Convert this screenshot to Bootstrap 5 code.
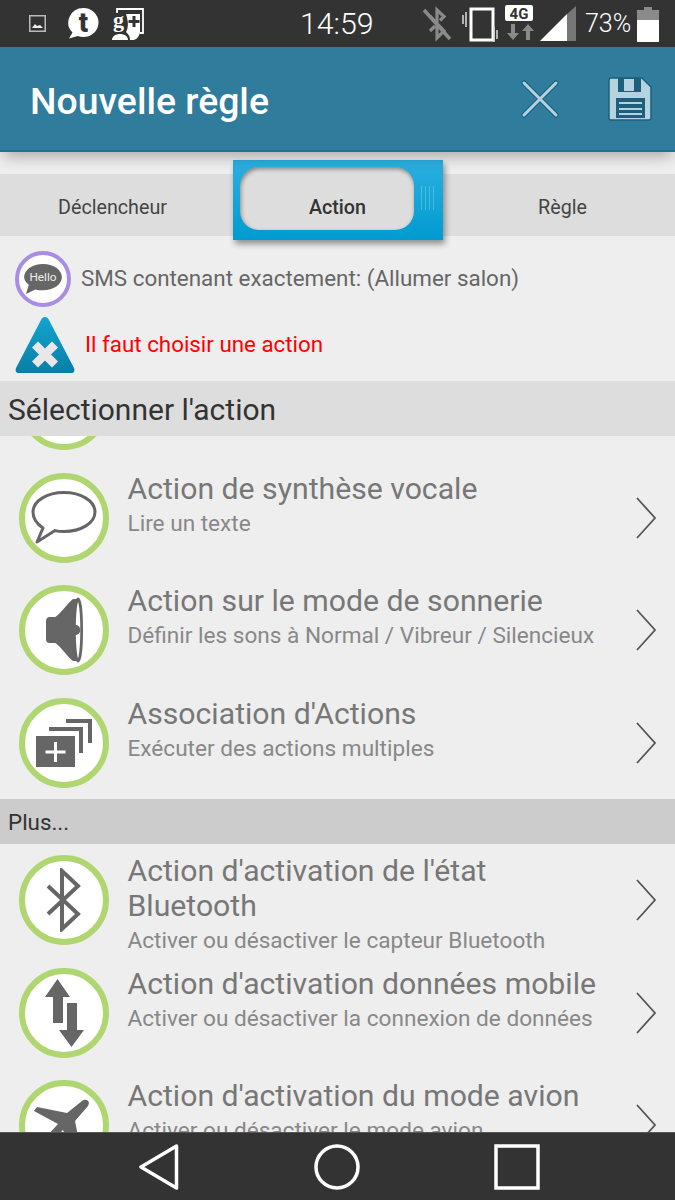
<!DOCTYPE html>
<html lang="fr">
<head>
<meta charset="utf-8">
<title>Nouvelle règle</title>
<link href="https://cdn.jsdelivr.net/npm/bootstrap@5.3.0/dist/css/bootstrap.min.css" rel="stylesheet">
<style>
html,body{margin:0;background:#eee}
body{font-family:Roboto,"Liberation Sans",sans-serif;width:675px;height:1200px;overflow:hidden}
.screen{width:675px;height:1200px;background:#eee}
.statusbar{height:47px;background:#333;color:#fff;flex:none}
.statusbar svg{display:block;flex:none}
.clock{font-size:30.3px;font-weight:300;line-height:50px;width:73px;margin-left:155px;white-space:nowrap}
.pct{font-size:25px;font-weight:300;line-height:50px;margin-left:9px;width:44px;white-space:nowrap}
.appbar{height:105px;background:#2f7c9d;flex:none;padding-left:30px;padding-right:22px;position:relative;z-index:3;box-shadow:0 8px 14px -4px rgba(0,0,0,.3);border-bottom:2px solid #28708f}
.apptitle{font-size:37.4px;font-weight:500;color:#fff;margin:0;padding-top:6px;line-height:1}
.stripgap{height:22px;flex:none}
.tabstrip{height:62px;background:#ddd;flex:none;position:relative}
.tabitem{width:225px;font-size:19.7px;color:#444;text-align:center;line-height:68px;position:relative;z-index:2}
.tabitem.on{font-weight:500;color:#333}
.tabblue{position:absolute;left:233px;top:-14px;width:210px;height:80px;background:linear-gradient(#2cafe0,#009bd0);box-shadow:2px 4px 6px rgba(0,0,0,.4);z-index:1}
.tabhole{position:absolute;left:7px;top:7px;width:174px;height:63px;background:#ddd;border-radius:19px;box-shadow:inset 1px 2px 4px rgba(0,0,0,.4)}
.tabgrip{position:absolute;left:188px;top:26px;width:14px;height:24px;background:repeating-linear-gradient(90deg,rgba(255,255,255,.22) 0 1px,transparent 1px 4px)}
.inforow{flex:none;height:145px;padding:15px 0 0 15px}
.trigger{height:56px;color:#666;font-size:22.4px}
.warn{height:65px;color:#f00;font-size:22.35px;margin-top:5px}
.thumb{width:56px;height:56px;border:4px solid #a98ce3;border-radius:50%;background:#fff;flex:none;margin-right:10px}
.sect{background:#ddd;height:55px;line-height:58px;padding-left:8px;font-size:30px;color:#333;flex:none}
.sect2{background:#ccc;height:45px;line-height:47px;padding-left:8px;font-size:22.4px;color:#333;flex:none}
.feed{flex:1 1 0;overflow:hidden;min-height:0}
.entry{height:112.5px;padding-left:19px;padding-right:18px;flex:none}
.sliver{height:25.5px;overflow:hidden;padding:0 0 0 19px;flex:none}
.sliver .disc{margin-top:-76px}
.disc{width:90px;height:90px;border:6px solid #b0d672;border-radius:50%;background:#fff;flex:none;margin-right:18.500px;display:flex;align-items:center;justify-content:center}
.entrytxt{padding-top:9px;padding-right:29px;align-self:flex-start;flex:1 1 0;min-width:0}
.etitle{font-size:30.2px;line-height:35px;color:#777}
.esub{font-size:22.6px;line-height:35px;color:#888}
.chev{flex:none}
.navbarbottom{height:68px;background:#333;flex:none;position:relative;z-index:3;border-top:1px solid #555}
.navbarbottom svg{display:block}
</style>
</head>
<body>
<div class="screen d-flex flex-column">

  <div class="statusbar d-flex align-items-center" style="padding-left:29px">
    <svg width="17" height="17" viewBox="0 0 17 17"><rect x=".75" y=".75" width="15.5" height="15.5" fill="none" stroke="#bbb" stroke-width="1.5"/><path d="M3 13l3-4 2 2 3-1 3 3z" fill="#eee"/></svg>
    <svg width="33" height="33" viewBox="0 0 33 33" style="margin-left:21px"><path d="M16.500 1a15 14.500 0 0 1 0 29c-2 0-4-.4-5.800-1.100L2 31.500l3.500-6A15 14.500 0 0 1 16.500 1z" fill="#fff"/><text x="16.500" y="25" text-anchor="middle" font-family="Roboto,sans-serif" font-weight="900" font-size="27" fill="#333">t</text></svg>
    <svg width="34" height="34" viewBox="0 0 34 34" style="margin-left:11px"><path d="M6 6V2h26v24h-3" fill="none" stroke="#fff" stroke-width="1.800"/><path d="M15 7h14v19c-2 5-4 7-7 7h-3c0-4-2-6-4-8 2-3 3-9 0-18z" fill="#fff"/><path d="M1 33c0-4 4-6 8-6s8 2 8 6z" fill="#fff"/><text x="7.500" y="20" text-anchor="middle" font-family="Liberation Serif,serif" font-weight="700" font-size="22" fill="#fff">g</text><path d="M23 9v11M17.500 14.500h11" stroke="#333" stroke-width="3"/></svg>
    <div class="clock">14:59</div>
    <svg width="30" height="38" viewBox="0 0 30 38" style="margin-left:49px"><path d="M8 11l14 15-7 7V5l7 6.500-4 4M8 26l5-5" fill="none" stroke="#8a8a8a" stroke-width="3.200"/><path d="M2 5l26 29" stroke="#8a8a8a" stroke-width="3.500"/></svg>
    <svg width="39" height="36" viewBox="0 0 39 36" style="margin-left:9px"><path d="M2 9v9M5 6v15" stroke="#ddd" stroke-width="1.500"/><rect x="10" y="3" width="22" height="31" fill="none" stroke="#fff" stroke-width="3"/><path d="M36 24v9M33 21v15" stroke="#ddd" stroke-width="1.500"/></svg>
    <svg width="29" height="37" viewBox="0 0 29 37" style="margin-left:5px"><rect x="0" y="0" width="28" height="16" rx="2" fill="#fff"/><text x="14" y="13.500" text-anchor="middle" font-family="Roboto,sans-serif" font-weight="700" font-size="15" fill="#333">4G</text><path d="M6 19v9h-4l6 7 6-7h-4v-9z" fill="#8a8a8a"/><path d="M21 35v-9h-4l6-7 6 7h-4v9z" fill="#8a8a8a"/></svg>
    <svg width="36" height="36" viewBox="0 0 36 36" style="margin-left:6px"><path d="M0 35L27 8v27z" fill="#fff"/><path d="M27 8L36 0v35h-9z" fill="#777"/></svg>
    <div class="pct">73%</div>
    <svg width="22" height="36" viewBox="0 0 22 36" style="margin-left:8px"><path d="M7 1h8v3h7v10H0V4h7z" fill="#8a8a8a"/><rect y="14" width="22" height="22" fill="#fff"/></svg>
  </div>

  <div class="appbar d-flex align-items-center">
    <h1 class="apptitle flex-grow-1">Nouvelle règle</h1>
    <svg width="38" height="38" viewBox="0 0 38 38" style="margin-right:48px"><path d="M3 3l32 32M35 3L3 35" stroke="#1f5f7c" stroke-width="5" stroke-linecap="round"/><path d="M3 3l32 32M35 3L3 35" stroke="#b3d3e0" stroke-width="3" stroke-linecap="round"/></svg>
    <svg width="46" height="46" viewBox="0 0 46 46"><path d="M2 4a2 2 0 0 1 2-2h31l9 9v31a2 2 0 0 1-2 2H4a2 2 0 0 1-2-2z" fill="#b3d3e0" stroke="#1f5f7c" stroke-width="1.500"/><rect x="11" y="2" width="23" height="14" fill="#1f5f7c"/><rect x="17" y="3" width="10" height="12" fill="#b3d3e0"/><rect x="9" y="22" width="29" height="20" fill="#1f5f7c"/><path d="M12 27h23M12 33h23M12 38h23" stroke="#b3d3e0" stroke-width="2"/></svg>
  </div>

  <div class="stripgap"></div>

  <div class="tabstrip d-flex">
    <div class="tabblue"><div class="tabhole"></div><div class="tabgrip"></div></div>
    <div class="tabitem">Déclencheur</div>
    <div class="tabitem on">Action</div>
    <div class="tabitem">Règle</div>
  </div>

  <div class="inforow">
    <div class="trigger d-flex align-items-center">
      <div class="thumb d-flex align-items-center justify-content-center">
        <svg width="40" height="34" viewBox="0 0 42 36"><path d="M21 2c11 0 20 6 20 14s-9 14-20 14c-3 0-6-.4-8-1L3 34l3-10C3 22 1 19 1 16 1 8 10 2 21 2z" fill="#666"/><text x="21" y="20.500" text-anchor="middle" font-family="Roboto,sans-serif" font-size="12.500" fill="#eee">Hello</text></svg>
      </div>
      <span>SMS contenant exactement: (Allumer salon)</span>
    </div>
    <div class="warn d-flex align-items-center">
      <svg width="60" height="58" viewBox="0 0 60 58" style="margin-right:10px;flex:none"><defs><linearGradient id="tg" x1="0" y1="0" x2="0" y2="1"><stop offset="0" stop-color="#13a5cf"/><stop offset="1" stop-color="#0a7ea6"/></linearGradient></defs><path d="M30 1c2 0 3 1 4 3l25 48c1 3 0 5-3 5H4c-3 0-4-2-3-5L26 4c1-2 2-3 4-3z" fill="url(#tg)"/><path d="M20 28.500l20 20M40 28.500L20 48.500" stroke="#e8e8e8" stroke-width="8.500"/></svg>
      <span>Il faut choisir une action</span>
    </div>
  </div>

  <div class="sect">Sélectionner l'action</div>

  <div class="feed d-flex flex-column">
    <div class="sliver"><div class="disc"></div></div>

    <div class="entry d-flex align-items-center">
      <div class="disc"><svg width="66" height="56" viewBox="0 0 66 56"><path d="M33 2.500c17 0 31 8.500 31 19.500S50 41.500 33 41.500c-3 0-6-.2-9-.9L6 52l6-14C6 34 2 28 2 22 2 11 16 2.500 33 2.500z" fill="#fff" stroke="#666" stroke-width="3" stroke-linejoin="round"/></svg></div>
      <div class="entrytxt"><div class="etitle">Action de synthèse vocale</div><div class="esub">Lire un texte</div></div>
      <svg class="chev" width="22" height="42" viewBox="0 0 22 42"><path d="M2 1l18 20L2 41" fill="none" stroke="#555" stroke-width="1.800"/></svg>
    </div>

    <div class="entry d-flex align-items-center">
      <div class="disc"><svg width="37" height="66" viewBox="0 0 41 66" preserveAspectRatio="none"><path d="M0 24c0-3 2-4 4-4h6c4-1 14-14 20-18h5v62h-5C24 60 14 47 10 46H4c-2 0-4-1-4-4z" fill="#666"/><ellipse cx="35.500" cy="33" rx="4" ry="31" fill="#fff" stroke="#666" stroke-width="3"/><circle cx="33" cy="33" r="5" fill="#666"/></svg></div>
      <div class="entrytxt"><div class="etitle">Action sur le mode de sonnerie</div><div class="esub">Définir les sons à Normal / Vibreur / Silencieux</div></div>
      <svg class="chev" width="22" height="42" viewBox="0 0 22 42"><path d="M2 1l18 20L2 41" fill="none" stroke="#555" stroke-width="1.800"/></svg>
    </div>

    <div class="entry d-flex align-items-center">
      <div class="disc"><svg width="56" height="48" viewBox="0 0 56 48"><path d="M0 17h39v31H0z" fill="#666"/><path d="M13 8h34v26h-4V12H13z" fill="#666"/><path d="M30 0h26v24h-4V4H30z" fill="#666"/><path d="M19.500 23v20M9.500 33h20" stroke="#fff" stroke-width="3"/></svg></div>
      <div class="entrytxt"><div class="etitle">Association d'Actions</div><div class="esub">Exécuter des actions multiples</div></div>
      <svg class="chev" width="22" height="42" viewBox="0 0 22 42"><path d="M2 1l18 20L2 41" fill="none" stroke="#555" stroke-width="1.800"/></svg>
    </div>

    <div class="sect2">Plus...</div>

    <div class="entry d-flex align-items-center">
      <div class="disc"><svg width="36" height="64" viewBox="0 0 36 64"><path d="M2 18l30 28-16 15V3l16 15L2 46" fill="none" stroke="#666" stroke-width="4"/></svg></div>
      <div class="entrytxt"><div class="etitle">Action d'activation de l'état Bluetooth</div><div class="esub">Activer ou désactiver le capteur Bluetooth</div></div>
      <svg class="chev" width="22" height="42" viewBox="0 0 22 42"><path d="M2 1l18 20L2 41" fill="none" stroke="#555" stroke-width="1.800"/></svg>
    </div>

    <div class="entry d-flex align-items-center">
      <div class="disc"><svg width="39" height="68" viewBox="0 0 39 68"><path d="M12.500 0L25 18H18V44H8V18H0z" fill="#666"/><path d="M26.500 68L14 51H22V24H32V51H39z" fill="#666"/></svg></div>
      <div class="entrytxt"><div class="etitle">Action d'activation données mobile</div><div class="esub">Activer ou désactiver la connexion de données</div></div>
      <svg class="chev" width="22" height="42" viewBox="0 0 22 42"><path d="M2 1l18 20L2 41" fill="none" stroke="#555" stroke-width="1.800"/></svg>
    </div>

    <div class="entry d-flex align-items-center">
      <div class="disc"><svg width="64" height="64" viewBox="0 0 64 64"><path d="M5 14L35 20 50 8C54 5 59 8 56 13L43 28 49 58 42 62 31 37 18 50 19 60 15 61 9 50 1 46 2 43 13 45 26 31 2 18z" fill="#666"/></svg></div>
      <div class="entrytxt"><div class="etitle">Action d'activation du mode avion</div><div class="esub">Activer ou désactiver le mode avion</div></div>
      <svg class="chev" width="22" height="42" viewBox="0 0 22 42"><path d="M2 1l18 20L2 41" fill="none" stroke="#555" stroke-width="1.800"/></svg>
    </div>
  </div>

  <div class="navbarbottom d-flex align-items-center">
    <svg width="40" height="46" viewBox="0 0 40 46" style="margin-left:139px"><path d="M37.500 2L2 23l35.500 21z" fill="none" stroke="#fff" stroke-width="3.500" stroke-linejoin="round"/></svg>
    <svg width="46" height="46" viewBox="0 0 46 46" style="margin-left:135px"><circle cx="23" cy="23" r="21" fill="none" stroke="#fff" stroke-width="3.500"/></svg>
    <svg width="46" height="46" viewBox="0 0 46 46" style="margin-left:134px"><rect x="2" y="2" width="42" height="42" fill="none" stroke="#fff" stroke-width="3.500"/></svg>
  </div>
</div>
<script src="https://cdn.jsdelivr.net/npm/bootstrap@5.3.0/dist/js/bootstrap.bundle.min.js"></script>
</body>
</html>
